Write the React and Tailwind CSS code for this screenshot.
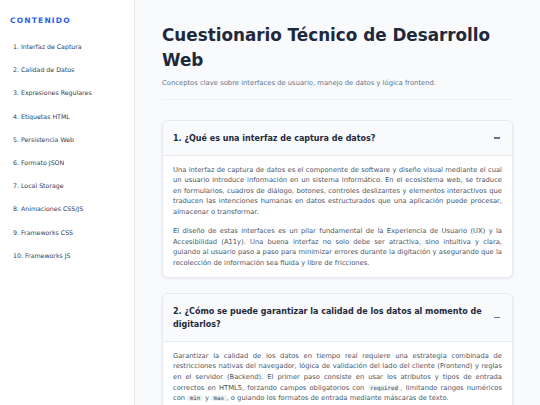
import React from "react";

const items = [
  "1. Interfaz de Captura",
  "2. Calidad de Datos",
  "3. Expresiones Regulares",
  "4. Etiquetas HTML",
  "5. Persistencia Web",
  "6. Formato JSON",
  "7. Local Storage",
  "8. Animaciones CSS/JS",
  "9. Frameworks CSS",
  "10. Frameworks JS",
];

function Code({ children }) {
  return (
    <code className="rounded-[2px] bg-[#eef1f5] px-[2.5px] font-['DejaVu_Sans_Mono',monospace] text-[5.8px] leading-[8px] text-[#334155]">
      {children}
    </code>
  );
}

function Card({ title, children }) {
  return (
    <div className="overflow-hidden rounded-[6px] border border-[#e6eaf0] bg-white shadow-[0_1px_3px_rgba(15,23,42,0.08)]">
      <div className="flex items-center justify-between gap-[4px] border-b border-[#e8ecf1] bg-[#f9fafb] px-[10px] py-[10.5px]">
        <h2 className="text-[8px] font-bold leading-[13px] text-[#1e293b]">{title}</h2>
        <div className="mr-[2px] h-[1.5px] w-[6px] shrink-0 bg-[#64748b]" />
      </div>
      <div className="flex flex-col gap-[8.4px] px-[10px] py-[8.7px] text-justify text-[6.75px] leading-[10.6px] text-[#4b5563]">
        {children}
      </div>
    </div>
  );
}

export default function App() {
  return (
    <div className="flex min-h-screen w-full font-['DejaVu_Sans',sans-serif]">
      <aside className="w-[135px] shrink-0 border-r border-[#e5e7eb] bg-white">
        <div className="pl-[10px] pt-[15.5px] text-[7.5px] font-bold leading-[10px] tracking-[1.2px] text-[#2563eb]">
          CONTENIDO
        </div>
        <nav className="mt-[9.7px] flex flex-col">
          {items.map((t) => (
            <div key={t} className="flex h-[23.2px] items-center pl-[13px] text-[6.25px] text-[#334155]">
              {t}
            </div>
          ))}
        </nav>
      </aside>
      <main className="min-w-0 flex-1 bg-[#f8fafc] px-[27px] pt-[22.5px] pb-8">
        <h1 className="text-[16.8px] font-bold leading-[25px] text-[#1e293b]">
          Cuestionario Técnico de Desarrollo Web
        </h1>
        <p className="mt-[5px] text-[6.8px] leading-[11px] text-[#64748b]">
          Conceptos clave sobre interfaces de usuario, manejo de datos y lógica frontend.
        </p>
        <div className="mt-[10px] h-[1.5px] bg-[#eceff3]" />
        <div className="mt-[20px] flex flex-col gap-[15px]">
          <Card title="1. ¿Qué es una interfaz de captura de datos?">
            <p>
              Una interfaz de captura de datos es el componente de software y diseño visual mediante el cual un usuario introduce información en un sistema informático. En el ecosistema web, se traduce en formularios, cuadros de diálogo, botones, controles deslizantes y elementos interactivos que traducen las intenciones humanas en datos estructurados que una aplicación puede procesar, almacenar o transformar.
            </p>
            <p>
              El diseño de estas interfaces es un pilar fundamental de la Experiencia de Usuario (UX) y la Accesibilidad (A11y). Una buena interfaz no solo debe ser atractiva, sino intuitiva y clara, guiando al usuario paso a paso para minimizar errores durante la digitación y asegurando que la recolección de información sea fluida y libre de fricciones.
            </p>
          </Card>
          <Card title="2. ¿Cómo se puede garantizar la calidad de los datos al momento de digitarlos?">
            <p>
              Garantizar la calidad de los datos en tiempo real requiere una estrategia combinada de restricciones nativas del navegador, lógica de validación del lado del cliente (Frontend) y reglas en el servidor (Backend). El primer paso consiste en usar los atributos y tipos de entrada correctos en HTML5, forzando campos obligatorios con <Code>required</Code>, limitando rangos numéricos con <Code>min</Code> y <Code>max</Code>, o guiando los formatos de entrada mediante máscaras de texto.
            </p>
            <p>
              Además, la validación en tiempo real con JavaScript permite informar al usuario de manera inmediata sobre cualquier error, mostrando mensajes claros y específicos junto al campo afectado.
            </p>
          </Card>
        </div>
      </main>
    </div>
  );
}
